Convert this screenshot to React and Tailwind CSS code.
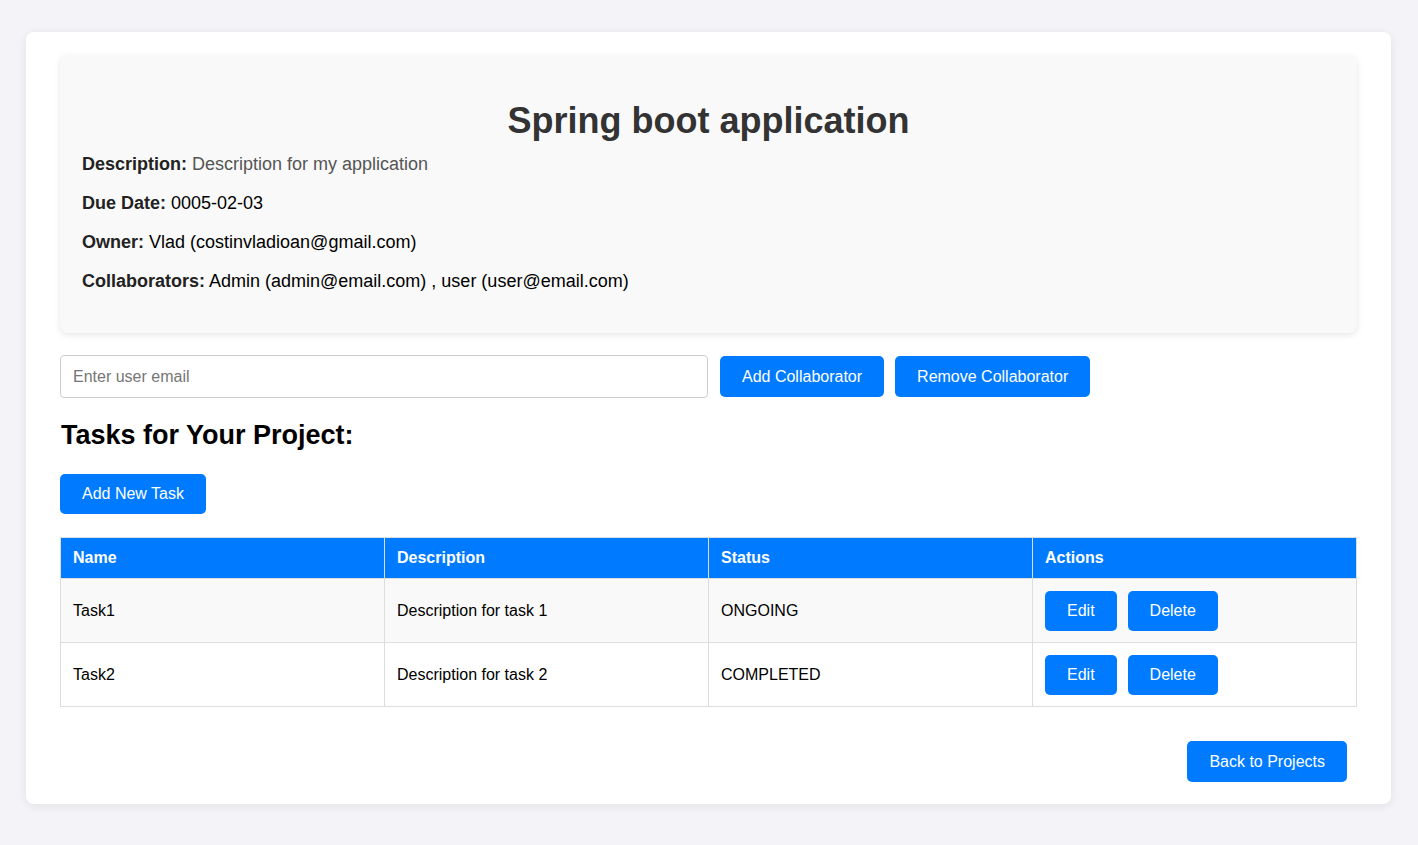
import React, { useState } from 'react';

const tasks = [
  { id: 1, name: 'Task1', description: 'Description for task 1', status: 'ONGOING' },
  { id: 2, name: 'Task2', description: 'Description for task 2', status: 'COMPLETED' }
];

const btn = 'bg-[#007bff] text-white text-[16px] rounded-[5px] px-[22px] flex items-center justify-center';

const ProjectDetails = () => {
  const [email, setEmail] = useState('');

  return (
    <div className="min-h-screen bg-[#f4f4f8] pt-[32px] pb-[41px] font-['Liberation_Sans',Arial,sans-serif]">
      <div className="ml-[26px] w-[1365px] bg-white rounded-[8px] shadow-[0_2px_10px_rgba(0,0,0,0.08)] px-[34px] pt-[23px] pb-[22px]">
        <div className="bg-[#f9f9f9] rounded-[8px] shadow-[0_2px_6px_rgba(0,0,0,0.1)] px-[22px] pt-[46px] pb-[41px]">
          <h1 className="text-center text-[36px] leading-[40px] font-bold text-[#333]">
            Spring boot application
          </h1>
          <div className="mt-[13px] flex flex-col gap-[18px] text-[18px] leading-[21px] text-black">
            <p>
              <strong className="text-[#222]">Description:</strong>{' '}
              <span className="text-[#555]">Description for my application</span>
            </p>
            <p>
              <strong className="text-[#222]">Due Date:</strong> 0005-02-03
            </p>
            <p>
              <strong className="text-[#222]">Owner:</strong> Vlad (costinvladioan@gmail.com)
            </p>
            <p>
              <strong className="text-[#222]">Collaborators:</strong> Admin (admin@email.com) , user (user@email.com)
            </p>
          </div>
        </div>

        <div className="mt-[22px] flex items-center">
          <input
            type="email"
            value={email}
            onChange={e => setEmail(e.target.value)}
            placeholder="Enter user email"
            className="w-[648px] h-[43px] px-[12px] text-[16px] border border-[#ccc] rounded-[4px] bg-white placeholder:text-[#757575] outline-none"
          />
          <button className={`${btn} h-[41px] ml-[12px]`}>Add Collaborator</button>
          <button className={`${btn} h-[41px] ml-[11px]`}>Remove Collaborator</button>
        </div>

        <h2 className="mt-[22px] ml-[1px] text-[27px] leading-[31px] font-bold text-black">
          Tasks for Your Project:
        </h2>

        <div className="mt-[23px] flex">
          <button className={`${btn} h-[40px]`}>Add New Task</button>
        </div>

        <table className="mt-[23px] w-full border-collapse table-fixed text-[16px] text-black">
          <thead>
            <tr className="h-[41px] bg-[#007bff] text-white">
              <th className="border border-[#ddd] px-[12px] text-left font-bold">Name</th>
              <th className="border border-[#ddd] px-[12px] text-left font-bold">Description</th>
              <th className="border border-[#ddd] px-[12px] text-left font-bold">Status</th>
              <th className="border border-[#ddd] px-[12px] text-left font-bold">Actions</th>
            </tr>
          </thead>
          <tbody>
            {tasks.map((task, i) => (
              <tr key={task.id} className={`h-[64px] ${i % 2 === 0 ? 'bg-[#f9f9f9]' : 'bg-white'}`}>
                <td className="border border-[#ddd] px-[12px]">{task.name}</td>
                <td className="border border-[#ddd] px-[12px]">{task.description}</td>
                <td className="border border-[#ddd] px-[12px]">{task.status}</td>
                <td className="border border-[#ddd] px-[12px]">
                  <div className="flex gap-[11px]">
                    <button className={`${btn} h-[40px]`}>Edit</button>
                    <button className={`${btn} h-[40px]`}>Delete</button>
                  </div>
                </td>
              </tr>
            ))}
          </tbody>
        </table>

        <div className="mt-[34px] mr-[10px] flex justify-end">
          <button className={`${btn} h-[41px]`}>Back to Projects</button>
        </div>
      </div>
    </div>
  );
};

export default function App() {
  return <ProjectDetails />;
}
